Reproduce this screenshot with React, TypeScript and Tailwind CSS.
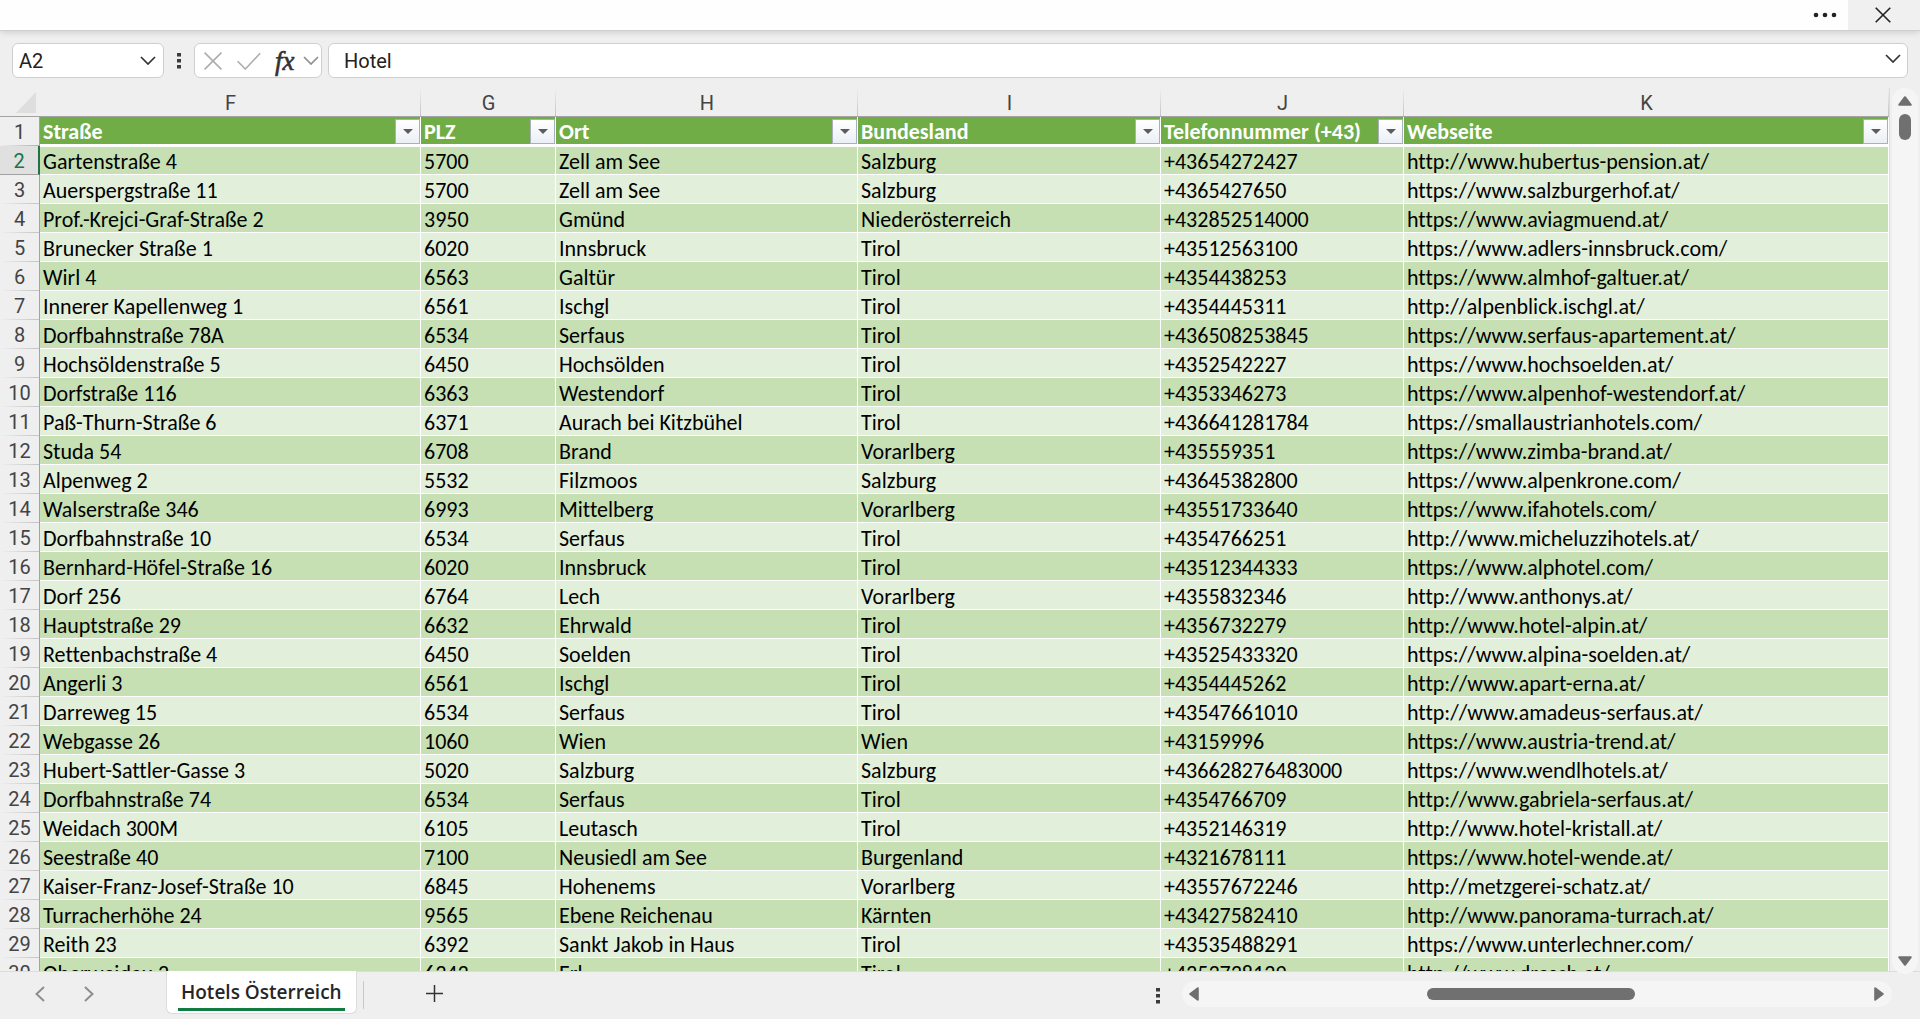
import { useState } from "react";

type Hotel = [street: string, zip: string, city: string, state: string, phone: string, url: string];

const columns = [
  { letter: "F", label: "Straße", width: "w-[381px]" },
  { letter: "G", label: "PLZ", width: "w-[135px]" },
  { letter: "H", label: "Ort", width: "w-[302px]" },
  { letter: "I", label: "Bundesland", width: "w-[303px]" },
  { letter: "J", label: "Telefonnummer (+43)", width: "w-[243px]" },
  { letter: "K", label: "Webseite", width: "" },
];

const hotels: Hotel[] = [
  ["Gartenstraße 4", "5700", "Zell am See", "Salzburg", "+43654272427", "http://www.hubertus-pension.at/"],
  ["Auerspergstraße 11", "5700", "Zell am See", "Salzburg", "+4365427650", "https://www.salzburgerhof.at/"],
  ["Prof.-Krejci-Graf-Straße 2", "3950", "Gmünd", "Niederösterreich", "+432852514000", "https://www.aviagmuend.at/"],
  ["Brunecker Straße 1", "6020", "Innsbruck", "Tirol", "+43512563100", "https://www.adlers-innsbruck.com/"],
  ["Wirl 4", "6563", "Galtür", "Tirol", "+4354438253", "https://www.almhof-galtuer.at/"],
  ["Innerer Kapellenweg 1", "6561", "Ischgl", "Tirol", "+4354445311", "http://alpenblick.ischgl.at/"],
  ["Dorfbahnstraße 78A", "6534", "Serfaus", "Tirol", "+436508253845", "https://www.serfaus-apartement.at/"],
  ["Hochsöldenstraße 5", "6450", "Hochsölden", "Tirol", "+4352542227", "https://www.hochsoelden.at/"],
  ["Dorfstraße 116", "6363", "Westendorf", "Tirol", "+4353346273", "https://www.alpenhof-westendorf.at/"],
  ["Paß-Thurn-Straße 6", "6371", "Aurach bei Kitzbühel", "Tirol", "+436641281784", "https://smallaustrianhotels.com/"],
  ["Studa 54", "6708", "Brand", "Vorarlberg", "+435559351", "https://www.zimba-brand.at/"],
  ["Alpenweg 2", "5532", "Filzmoos", "Salzburg", "+43645382800", "https://www.alpenkrone.com/"],
  ["Walserstraße 346", "6993", "Mittelberg", "Vorarlberg", "+43551733640", "https://www.ifahotels.com/"],
  ["Dorfbahnstraße 10", "6534", "Serfaus", "Tirol", "+4354766251", "http://www.micheluzzihotels.at/"],
  ["Bernhard-Höfel-Straße 16", "6020", "Innsbruck", "Tirol", "+43512344333", "https://www.alphotel.com/"],
  ["Dorf 256", "6764", "Lech", "Vorarlberg", "+4355832346", "http://www.anthonys.at/"],
  ["Hauptstraße 29", "6632", "Ehrwald", "Tirol", "+4356732279", "http://www.hotel-alpin.at/"],
  ["Rettenbachstraße 4", "6450", "Soelden", "Tirol", "+43525433320", "https://www.alpina-soelden.at/"],
  ["Angerli 3", "6561", "Ischgl", "Tirol", "+4354445262", "http://www.apart-erna.at/"],
  ["Darreweg 15", "6534", "Serfaus", "Tirol", "+43547661010", "http://www.amadeus-serfaus.at/"],
  ["Webgasse 26", "1060", "Wien", "Wien", "+43159996", "https://www.austria-trend.at/"],
  ["Hubert-Sattler-Gasse 3", "5020", "Salzburg", "Salzburg", "+436628276483000", "https://www.wendlhotels.at/"],
  ["Dorfbahnstraße 74", "6534", "Serfaus", "Tirol", "+4354766709", "http://www.gabriela-serfaus.at/"],
  ["Weidach 300M", "6105", "Leutasch", "Tirol", "+4352146319", "http://www.hotel-kristall.at/"],
  ["Seestraße 40", "7100", "Neusiedl am See", "Burgenland", "+4321678111", "https://www.hotel-wende.at/"],
  ["Kaiser-Franz-Josef-Straße 10", "6845", "Hohenems", "Vorarlberg", "+43557672246", "http://metzgerei-schatz.at/"],
  ["Turracherhöhe 24", "9565", "Ebene Reichenau", "Kärnten", "+43427582410", "http://www.panorama-turrach.at/"],
  ["Reith 23", "6392", "Sankt Jakob in Haus", "Tirol", "+43535488291", "https://www.unterlechner.com/"],
  ["Oberweidau 2", "6343", "Erl", "Tirol", "+4353738129", "http://www.dresch.at/"],
];

function Chevron({ className }: { className: string }) {
  return (
    <svg width="16" height="9" viewBox="0 0 16 9" fill="none" stroke="currentColor" strokeWidth="1.7" className={className}>
      <path d="M1 1l7 7 7-7" />
    </svg>
  );
}

function VerticalDots() {
  return (
    <svg width="4" height="16" viewBox="0 0 4 16" fill="#3b3b3b">
      <path d="M0 0h4v3.5H0zM0 6h4v3.5H0zM0 12h4v3.5H0z" />
    </svg>
  );
}

function ScrollArrow({ className }: { className: string }) {
  return (
    <svg width="14" height="10" viewBox="0 0 14 10" className={className}>
      <path d="M7 1.2L12.8 8.8H1.2z" fill="#6f6f6f" stroke="#6f6f6f" strokeWidth="2" strokeLinejoin="round" />
    </svg>
  );
}

function TitleBar() {
  return (
    <header className="relative z-10 flex h-[31px] shrink-0 justify-end border-b border-[#cfcfcf] bg-[#fefefe] shadow-[0_1px_7px_rgba(0,0,0,0.16)]">
      <button aria-label="Mehr" className="flex w-[46px] items-center justify-center">
        <svg width="24" height="6" viewBox="0 0 24 6" fill="#222">
          <circle cx="3" cy="3" r="2.3" />
          <circle cx="12" cy="3" r="2.3" />
          <circle cx="21" cy="3" r="2.3" />
        </svg>
      </button>
      <button aria-label="Schließen" className="flex w-[72px] items-center justify-center bg-[#f0f0f0] pr-0.5">
        <svg width="16" height="16" viewBox="0 0 16 16" fill="none" stroke="#222" strokeWidth="1.6">
          <path d="M.7.7l14.6 14.6M15.3.7L.7 15.3" />
        </svg>
      </button>
    </header>
  );
}

function FormulaBar() {
  const [cell, setCell] = useState("A2");
  const [formula, setFormula] = useState("Hotel");

  return (
    <div className="flex h-[57px] shrink-0 items-start pt-3 pr-3 pl-3 font-['Roboto',sans-serif] text-[20px] text-[#222]">
      <div className="flex h-[35px] w-[152px] items-center rounded-md border border-[#cfcfcf] bg-white pr-[7px]">
        <input
          aria-label="Namenfeld"
          value={cell}
          onChange={(e) => setCell(e.target.value)}
          className="min-w-0 flex-1 pl-1.5 outline-none"
        />
        <button aria-label="Namen anzeigen">
          <Chevron className="text-[#333]" />
        </button>
      </div>
      <div className="flex h-[35px] w-[30px] items-center justify-center">
        <VerticalDots />
      </div>
      <div className="flex h-[35px] w-32 items-center rounded-md border border-[#cfcfcf] bg-white pr-0.5 pl-[9px] text-[#adadad]">
        <button aria-label="Abbrechen">
          <svg width="18" height="18" viewBox="0 0 18 18" fill="none" stroke="currentColor" strokeWidth="1.6">
            <path d="M.6.6l16.8 16.8M17.4.6L.6 17.4" />
          </svg>
        </button>
        <button aria-label="Eingeben" className="ml-[15px]">
          <svg width="24" height="18" viewBox="0 0 24 18" fill="none" stroke="currentColor" strokeWidth="1.6">
            <path d="M.6 9.2L8.4 17 23.2 1.2" />
          </svg>
        </button>
        <button
          aria-label="Funktion einfügen"
          className="ml-3.5 flex-1 text-left font-['Liberation_Serif',serif] text-[27px] leading-6 text-[#333] italic [-webkit-text-stroke:0.6px_#333]"
        >
          fx
        </button>
        <button aria-label="Funktionsliste">
          <Chevron className="text-[#8f8f8f]" />
        </button>
      </div>
      <div className="ml-1.5 flex h-[35px] flex-1 items-center rounded-md border border-[#cfcfcf] bg-white pr-1.5">
        <input
          aria-label="Bearbeitungsleiste"
          value={formula}
          onChange={(e) => setFormula(e.target.value)}
          className="min-w-0 flex-1 pl-[15px] outline-none"
        />
        <button aria-label="Bearbeitungsleiste erweitern" className="pb-1">
          <Chevron className="text-[#333]" />
        </button>
      </div>
    </div>
  );
}

function FilterButton({ label }: { label: string }) {
  return (
    <button
      aria-label={`${label} filtern`}
      className="flex size-[25px] shrink-0 items-center justify-center border border-[#a9afbb] bg-linear-to-b from-white to-[#ebeff6]"
    >
      <svg width="10" height="5" viewBox="0 0 10 5" fill="#5c5c5c">
        <path d="M0 0h10L5 5z" />
      </svg>
    </button>
  );
}

function Grid() {
  return (
    <table className="w-full table-fixed border-separate border-spacing-0 font-['Carlito','Calibri','Lato',sans-serif] text-[22px] [font-variant-ligatures:none]">
      <thead>
        <tr className="h-[29px] font-['Roboto',sans-serif] text-[20px] leading-6 text-[#444]">
          <td className="w-10 border-b border-[#a3a3a3] p-0">
            <svg width="20" height="21" viewBox="0 0 20 21" fill="#dedede" className="ml-4">
              <path d="M20 0v21H0z" />
            </svg>
          </td>
          {columns.map((col) => (
            <th
              key={col.letter}
              scope="col"
              className={`border-b border-[#a3a3a3] bg-linear-to-b from-transparent to-[#c4c4c4] bg-[length:1px_100%] bg-right bg-no-repeat p-0 pt-0.5 font-normal ${col.width}`}
            >
              {col.letter}
            </th>
          ))}
        </tr>
      </thead>
      <tbody>
        <tr className="h-[29px]">
          <th scope="row" className="border-r border-[#a3a3a3] bg-linear-to-r from-transparent to-[#b0b0b0] bg-[length:100%_1px] bg-bottom bg-no-repeat p-0 pt-0.5 font-['Roboto',sans-serif] text-[20px] leading-[25px] font-normal text-[#444]">
            1
          </th>
          {columns.map((col) => (
            <th key={col.label} scope="col" className="border-r border-b-2 border-white bg-[#70ad47] p-0 pl-[3px] text-left leading-[25px] font-bold text-white">
              <div className="flex h-[27px] items-end justify-between">
                <span>{col.label}</span>
                <FilterButton label={col.label} />
              </div>
            </th>
          ))}
        </tr>
        {hotels.map((hotel, i) => (
          <tr key={i} className={`h-[29px] leading-[25px] ${i % 2 ? "bg-[#e2efda]" : "bg-[#c6e0b4]"}`}>
            <th
              scope="row"
              className={
                i === 0
                  ? "border-r-2 border-b border-r-[#217346] border-b-[#a3a3a3] bg-[#e0e0e0] p-0 pt-0.5 font-['Roboto',sans-serif] text-[20px] font-normal text-[#217346]"
                  : "border-r border-[#a3a3a3] bg-[#efefef] bg-linear-to-r from-[#efefef] to-[#c4c4c4] bg-[length:100%_1px] bg-bottom bg-no-repeat p-0 pt-0.5 font-['Roboto',sans-serif] text-[20px] font-normal text-[#444]"
              }
            >
              {i + 2}
            </th>
            {hotel.map((value, c) => (
              <td
                key={c}
                className={`overflow-hidden border-r border-b border-white p-0 pt-0.5 pl-[3px] whitespace-nowrap text-black ${i === 0 ? "border-t" : ""}`}
              >
                {value}
              </td>
            ))}
          </tr>
        ))}
      </tbody>
    </table>
  );
}

function SheetBar() {
  return (
    <footer className="flex h-12 shrink-0 items-start border-t border-[#dcdcdc] text-[#444]">
      <div className="flex h-11 w-[166px] items-center pl-[35px]">
        <button aria-label="Vorheriges Blatt">
          <svg width="10" height="16" viewBox="0 0 10 16" fill="none" stroke="#8c8c8c" strokeWidth="1.9">
            <path d="M9 1L1.5 8 9 15" />
          </svg>
        </button>
        <button aria-label="Nächstes Blatt" className="ml-[39px]">
          <svg width="10" height="16" viewBox="0 0 10 16" fill="none" stroke="#8c8c8c" strokeWidth="1.9">
            <path d="M1 1l7.5 7L1 15" />
          </svg>
        </button>
      </div>
      <button className="-mt-px h-[43px] rounded-b-md border border-t-0 border-[#dcdcdc] bg-white px-[11px] font-['Open_Sans',sans-serif] text-[19px] font-semibold text-[#262626]">
        <span className="flex h-[38px] items-center border-b-[3px] border-[#107c41] px-[3px] pt-1">Hotels Österreich</span>
      </button>
      <div className="mt-[9px] ml-1.5 h-7 w-px bg-[#c8c8c8]" />
      <button aria-label="Neues Blatt" className="mt-[13px] ml-[62px]">
        <svg width="17" height="17" viewBox="0 0 17 17" fill="none" stroke="#333" strokeWidth="1.5">
          <path d="M8.5 0v17M0 8.5h17" />
        </svg>
      </button>
      <div className="mt-4 mr-[22px] ml-auto">
        <VerticalDots />
      </div>
      <div className="mt-[9px] mr-7 flex h-[26px] w-[37%] items-center rounded-full bg-[#f5f5f5] pr-1.5 pl-[5px]">
        <button aria-label="Nach links">
          <ScrollArrow className="-rotate-90" />
        </button>
        <div className="flex flex-1 justify-end pr-[237px]">
          <div className="h-3 w-[208px] rounded-full bg-[#707070]" />
        </div>
        <button aria-label="Nach rechts">
          <ScrollArrow className="rotate-90" />
        </button>
      </div>
    </footer>
  );
}

export default function App() {
  return (
    <div className="flex h-screen flex-col overflow-hidden bg-[#efefef]">
      <TitleBar />
      <FormulaBar />
      <main className="flex min-h-0 flex-1">
        <div className="min-w-0 flex-1 overflow-hidden border-r border-[#dcdcdc]">
          <Grid />
        </div>
        <div className="z-10 mr-0.5 -mb-[3px] ml-0.5 flex w-[26px] flex-col items-center rounded-full bg-[#f5f5f5] py-2">
          <button aria-label="Nach oben">
            <ScrollArrow className="block" />
          </button>
          <div className="mt-2 h-[26px] w-3 rounded-full bg-[#707070]" />
          <button aria-label="Nach unten" className="mt-auto">
            <ScrollArrow className="block rotate-180" />
          </button>
        </div>
      </main>
      <SheetBar />
    </div>
  );
}
